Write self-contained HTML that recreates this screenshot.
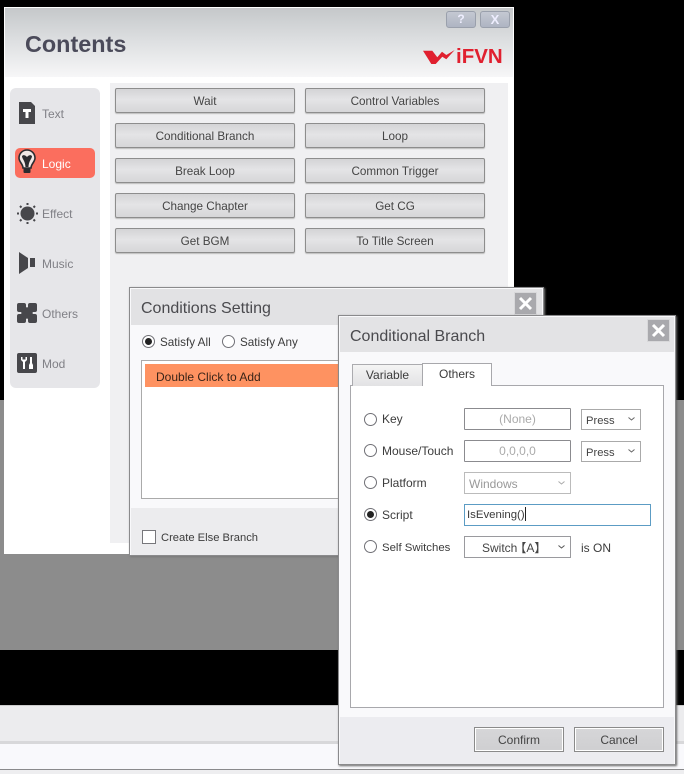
<!DOCTYPE html>
<html><head><meta charset="utf-8"><style>
html,body{margin:0;padding:0;background:#000}
#r{position:relative;width:684px;height:774px;overflow:hidden;background:#000;font-family:"Liberation Sans","Noto Sans CJK SC",sans-serif;font-size:12px;color:#3c3c3c;filter:blur(.3px)}
#r div,#r span.a,#r svg{position:absolute;box-sizing:border-box}
.t{white-space:nowrap;line-height:16px}
.btn{width:180px;height:25px;border:1px solid #8d8d8d;border-radius:2px;background:linear-gradient(#d4d4d6,#e4e4e6 45%,#d6d6d8);text-align:center;line-height:26px;color:#444;box-shadow:0 1px 1px #bbb;font-size:11.7px}
.side{font-size:12px;color:#808086}
.rad{width:13px;height:13px;border:1px solid #707076;border-radius:50%;background:#fff}
.rad.on:after{content:"";position:absolute;left:2px;top:2px;width:7px;height:7px;border-radius:50%;background:#222}
.box{border:1px solid #8b8b8f;background:#fff;height:22px;border-radius:1px;text-align:center;line-height:21px;color:#aaa}
.sel{border:1px solid #aaa;background:#fff;height:21px;line-height:21px;color:#444}
.ch{width:7px;height:4px}
.db{width:90px;height:25px;border:1px solid #8a8a8a;outline:1px solid #fff;outline-offset:-2px;background:linear-gradient(#d6d6d8,#cfcfd1);text-align:center;line-height:24px;color:#444}
</style></head><body><div id="r">
<div style="left:0;top:400px;width:684px;height:250px;background:#8c8c8c"></div>
<div style="left:0;top:705px;width:684px;height:37px;background:#ececee;border-top:1px solid #ccc"></div>
<div style="left:0;top:741px;width:684px;height:3px;background:#d8d8da"></div>
<div style="left:0;top:744px;width:684px;height:25px;background:#f9f9fc"></div>
<div style="left:0;top:769px;width:684px;height:1px;background:#8a8a8c"></div>
<div style="left:0;top:770px;width:684px;height:4px;background:#eeeeF0"></div>

<div style="left:4px;top:7px;width:510px;height:547px;background:#fff;border-top:1px solid #fff"></div>
<div style="left:5px;top:8px;width:508px;height:69px;background:linear-gradient(#c5c8ca,#dcdee0 45%,#f7f7f8)"></div>
<div class="t" style="left:25px;top:30px;font-size:23.4px;line-height:28px;font-weight:bold;color:#4b4b5a">Contents</div>
<div style="left:446px;top:11px;width:30px;height:17px;border:1px solid #9aa0ac;border-radius:3px;background:linear-gradient(#c4c8d2,#aeb4c2);color:#eef;text-align:center;line-height:15px;font-weight:bold;font-size:12px">?</div>
<div style="left:480px;top:11px;width:30px;height:17px;border:1px solid #9aa0ac;border-radius:3px;background:linear-gradient(#c4c8d2,#aeb4c2);color:#eef;text-align:center;line-height:15px;font-weight:bold;font-size:13px">X</div>
<svg style="left:423px;top:49px" width="33" height="16" viewBox="0 0 33 16"><path d="M0 1.700H9.300L14.300 8.300 19 2.700 23.300 6 31.700 1 23.300 10.300 19.300 7.700 12.700 15H8.300Z" fill="#e0202f"/></svg>
<div class="t" style="left:456px;top:47px;font-size:20.5px;line-height:20px;font-weight:bold;color:#e0202f">iFVN</div>

<div style="left:110px;top:83px;width:398px;height:460px;background:#f0f0f2"></div>
<div style="left:10px;top:88px;width:90px;height:300px;background:#e6e6e9;border-radius:6px"></div>
<div style="left:15px;top:148px;width:80px;height:30px;background:#fb6e5e;border-radius:5px"></div>

<svg style="left:19px;top:102px" width="16" height="22" viewBox="0 0 16 22"><path d="M0 0H12L16 4V22H0Z" fill="#47474b"/><path d="M4 7H12V10H9.500V16H6.500V10H4Z" fill="#fff"/></svg>
<svg style="left:18px;top:149px" width="18" height="26" viewBox="0 0 18 26"><path d="M9 1A8 8 0 0 1 17 9C17 13 13 15 13 19H5C5 15 1 13 1 9A8 8 0 0 1 9 1Z" fill="#f2e8e6" stroke="#2c2c30" stroke-width="1.600"/><path d="M4 7C6 5 8 7 9 8 10 7 12 5 14 7 14 10 11 11 10.500 18H7.500C7 11 4 10 4 7Z" fill="#2c2c30"/><rect x="5.500" y="19" width="7" height="5" rx="1" fill="#2c2c30"/></svg>
<svg style="left:17px;top:203px" width="21" height="21" viewBox="0 0 21 21"><circle cx="10.500" cy="10.500" r="7" fill="#47474b"/><g stroke="#47474b" stroke-width="2"><path d="M10.500 0V2M10.500 19V21M0 10.500H2M19 10.500H21M3 3L4.500 4.500M16.500 16.500L18 18M18 3L16.500 4.500M4.500 16.500L3 18"/></g></svg>
<svg style="left:19px;top:252px" width="17" height="22" viewBox="0 0 17 22"><path d="M0 0L9 6V16L0 22Z" fill="#47474b"/><rect x="11" y="6" width="5" height="9" fill="#47474b"/></svg>
<svg style="left:17px;top:303px" width="20" height="20" viewBox="0 0 20 20"><path d="M2 0H7Q9 0 9 2V4Q10 5 11 4V2Q11 0 13 0H18Q20 0 20 2V7Q20 9 18 9H16Q15 10 16 11H18Q20 11 20 13V18Q20 20 18 20H13Q11 20 11 18V16Q10 15 9 16V18Q9 20 7 20H2Q0 20 0 18V13Q0 11 2 11H4Q5 10 4 9H2Q0 9 0 7V2Q0 0 2 0Z" fill="#47474b"/></svg>
<svg style="left:17px;top:353px" width="20" height="20" viewBox="0 0 20 20"><rect width="20" height="20" rx="2" fill="#47474b"/><path d="M4 4V7L6 9V16H8V9L10 7V4H8.500V6.500H5.500V4ZM13 4H15V10L16 12V16H12V12L13 10Z" fill="#fff"/></svg>

<div class="t side" style="left:42px;top:106px">Text</div>
<div class="t side" style="left:42px;top:156px;color:#fff">Logic</div>
<div class="t side" style="left:42px;top:206px">Effect</div>
<div class="t side" style="left:42px;top:256px">Music</div>
<div class="t side" style="left:42px;top:306px">Others</div>
<div class="t side" style="left:42px;top:356px">Mod</div>

<div class="btn" style="left:115px;top:88px">Wait</div>
<div class="btn" style="left:305px;top:88px">Control Variables</div>
<div class="btn" style="left:115px;top:123px">Conditional Branch</div>
<div class="btn" style="left:305px;top:123px">Loop</div>
<div class="btn" style="left:115px;top:158px">Break Loop</div>
<div class="btn" style="left:305px;top:158px">Common Trigger</div>
<div class="btn" style="left:115px;top:193px">Change Chapter</div>
<div class="btn" style="left:305px;top:193px">Get CG</div>
<div class="btn" style="left:115px;top:228px">Get BGM</div>
<div class="btn" style="left:305px;top:228px">To Title Screen</div>

<!-- Conditions Setting -->
<div style="left:129px;top:287px;width:415px;height:269px;background:#f9f9fb;border:1px solid #8a8a8c;box-shadow:1px 1px 2px #777"></div>
<div style="left:131px;top:289px;width:411px;height:36px;background:#e2e2e4"></div>
<div style="left:514px;top:292px;width:23px;height:23px;background:#a9a9ad;border:1px solid #d8d8da"></div>
<svg style="left:518px;top:296px" width="15" height="15" viewBox="0 0 15 15"><path d="M2 2L13 13M13 2L2 13" stroke="#fff" stroke-width="3"/></svg>
<div class="t" style="left:141px;top:299px;font-size:16px;line-height:20px;color:#4a4a4e">Conditions Setting</div>
<div class="rad on" style="left:142px;top:335px"></div>
<div class="t" style="left:160px;top:335px;font-size:11.7px">Satisfy All</div>
<div class="rad" style="left:222px;top:335px"></div>
<div class="t" style="left:240px;top:335px;font-size:11.7px">Satisfy Any</div>
<div style="left:141px;top:360px;width:240px;height:139px;background:#fff;border:1px solid #aaa"></div>
<div style="left:145px;top:364px;width:200px;height:23px;background:#fe9261"></div>
<div class="t" style="left:156px;top:369px;color:#3a2418">Double Click to Add</div>
<div style="left:131px;top:508px;width:411px;height:47px;background:#ececee"></div>
<div style="left:142px;top:530px;width:14px;height:14px;background:#fff;border:1px solid #77777b"></div>
<div class="t" style="left:161px;top:530px;font-size:11.2px">Create Else Branch</div>

<!-- Conditional Branch -->
<div style="left:338px;top:315px;width:338px;height:450px;background:#f9f9fb;border:1px solid #8a8a8c;box-shadow:1px 1px 2px #666"></div>
<div style="left:340px;top:317px;width:334px;height:35px;background:#e3e3e5"></div>
<div style="left:647px;top:319px;width:23px;height:23px;background:#a9a9ad;border:1px solid #d8d8da"></div>
<svg style="left:651px;top:323px" width="15" height="15" viewBox="0 0 15 15"><path d="M2 2L13 13M13 2L2 13" stroke="#fff" stroke-width="3"/></svg>
<div class="t" style="left:350px;top:327px;font-size:16px;line-height:20px;color:#4a4a4e">Conditional Branch</div>

<div style="left:350px;top:385px;width:314px;height:323px;background:#fff;border:1px solid #a8a8ac"></div>
<div style="left:352px;top:364px;width:71px;height:22px;background:linear-gradient(#f4f4f4,#e2e2e4);border:1px solid #ababaf;border-bottom:0;text-align:center;line-height:21px">Variable</div>
<div style="left:422px;top:363px;width:70px;height:23px;background:#fff;border:1px solid #a8a8ac;border-bottom:0;text-align:center;line-height:20px">Others</div>

<div class="rad" style="left:364px;top:413px"></div>
<div class="t" style="left:382px;top:411px">Key</div>
<div class="box" style="left:464px;top:408px;width:107px">(None)</div>
<div class="sel" style="left:581px;top:409px;width:60px;padding-left:4px;line-height:22px;font-size:11.2px">Press</div>
<svg class="ch" style="left:628px;top:417px" viewBox="0 0 7 4"><path d="M.5.5L3.500 3 6.500.5" fill="none" stroke="#666"/></svg>

<div class="rad" style="left:364px;top:444px"></div>
<div class="t" style="left:382px;top:443px">Mouse/Touch</div>
<div class="box" style="left:464px;top:440px;width:107px">0,0,0,0</div>
<div class="sel" style="left:581px;top:441px;width:60px;padding-left:4px;line-height:22px;font-size:11.2px">Press</div>
<svg class="ch" style="left:628px;top:449px" viewBox="0 0 7 4"><path d="M.5.5L3.500 3 6.500.5" fill="none" stroke="#666"/></svg>

<div class="rad" style="left:364px;top:476px"></div>
<div class="t" style="left:382px;top:475px">Platform</div>
<div class="sel" style="left:464px;top:472px;width:107px;height:22px;padding-left:4px;color:#999;border-color:#bbb;line-height:22px">Windows</div>
<svg class="ch" style="left:558px;top:481px" viewBox="0 0 7 4"><path d="M.5.5L3.500 3 6.500.5" fill="none" stroke="#aaa"/></svg>

<div class="rad on" style="left:364px;top:508px"></div>
<div class="t" style="left:382px;top:507px">Script</div>
<div style="left:464px;top:504px;width:187px;height:22px;background:#fff;border:1px solid #5c9cc4;line-height:20px;padding-left:2px;color:#3a3a3a;font-size:11.4px">IsEvening()<span style="display:inline-block;width:1px;height:14px;background:#222;vertical-align:-3px"></span></div>

<div class="rad" style="left:364px;top:540px"></div>
<div class="t" style="left:382px;top:540px;font-size:11.4px">Self Switches</div>
<div class="sel" style="left:464px;top:536px;width:107px;height:22px;padding-left:17px;border-color:#9a9a9e;line-height:22px;white-space:nowrap">Switch<span style="margin-left:-3px">【</span>A<span>】</span></div>
<svg class="ch" style="left:558px;top:545px" viewBox="0 0 7 4"><path d="M.5.5L3.500 3 6.500.5" fill="none" stroke="#555"/></svg>
<div class="t" style="left:581px;top:540px">is ON</div>

<div style="left:340px;top:717px;width:334px;height:47px;background:#ececf0"></div>
<div class="db" style="left:474px;top:727px">Confirm</div>
<div class="db" style="left:574px;top:727px">Cancel</div>
</div></body></html>
